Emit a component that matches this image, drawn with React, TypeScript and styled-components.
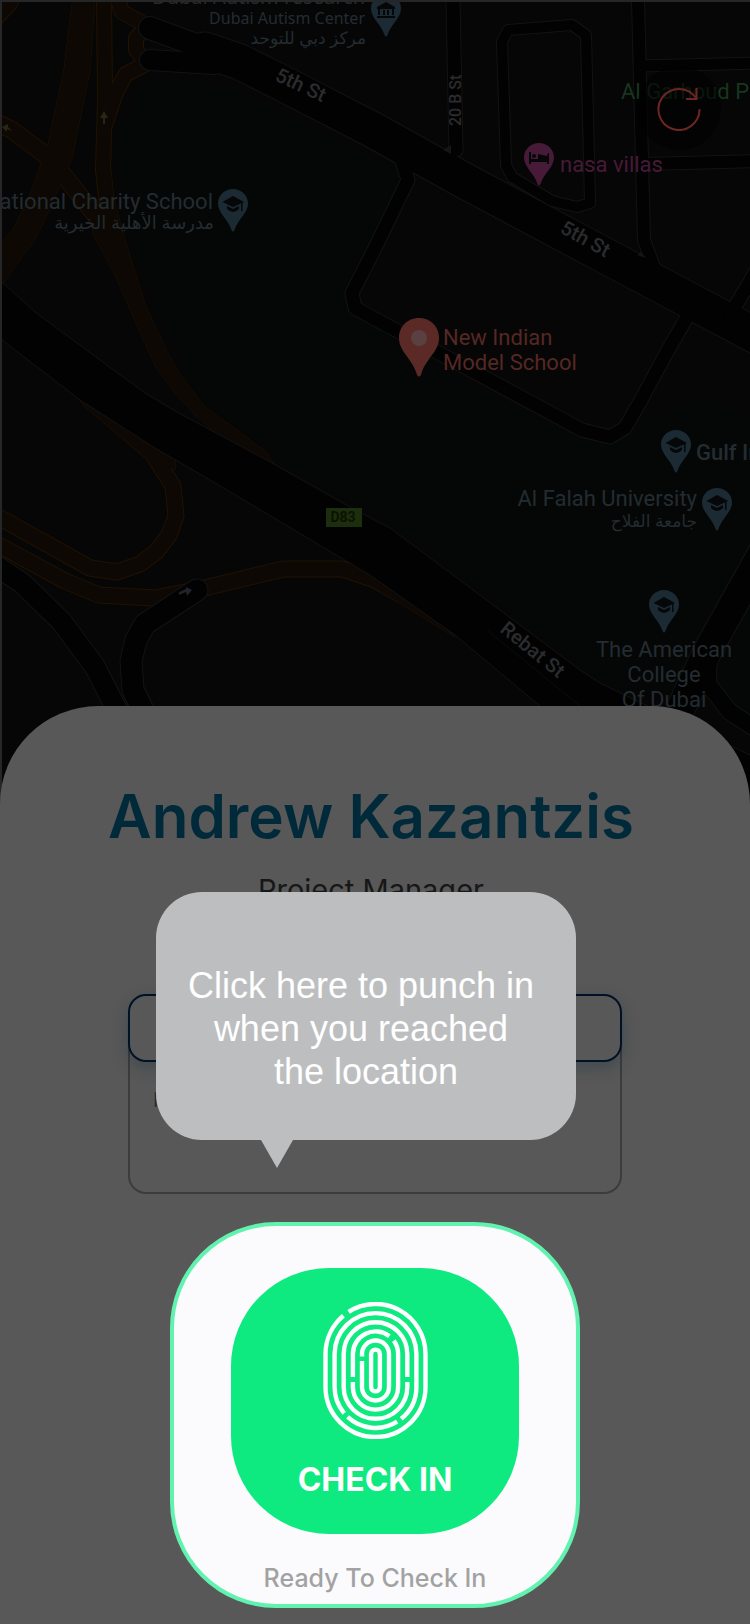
import React from "react";
import styled, { createGlobalStyle } from "styled-components";

const GlobalStyle = createGlobalStyle`
  *, *::before, *::after { box-sizing: border-box; }
  html { background: #060606; }
  body { margin: 0; font-family: Inter, "Liberation Sans", sans-serif; }
  button { font: inherit; padding: 0; cursor: pointer; }
`;

const Screen = styled.main`
  display: flex;
  flex-direction: column;
  min-height: 100vh;
  background: #060606;
`;

const MapPanel = styled.section`
  position: relative;
  height: 806px;
  margin-bottom: -100px;
  border-top: 2px solid #262626;
  border-left: 2px solid #262626;
  overflow: hidden;
`;

const MapDrawing = styled.svg`
  display: block;
  width: 100%;
  height: 100%;
`;

const RefreshButton = styled.button`
  position: absolute;
  top: 64px;
  right: 29px;
  width: 84px;
  height: 84px;
  display: grid;
  place-items: center;
  border: 0;
  border-radius: 50%;
  background: rgba(2, 2, 2, 0.6);
`;

const Sheet = styled.section`
  position: relative;
  flex: 1;
  display: flex;
  flex-direction: column;
  align-items: center;
  padding: 76px 16px 16px;
  border-radius: 98px 98px 0 0;
  background: #585858;
`;

const Profile = styled.header`
  padding-right: 8px;
  text-align: center;
`;

const Name = styled.h1`
  margin: 0;
  font-size: 60px;
  font-weight: 600;
  line-height: 68px;
  color: #002a3a;
`;

const Role = styled.p`
  margin: 22px 0 0;
  font-size: 29px;
  line-height: 36px;
  color: #171717;
`;

const Shift = styled.section`
  width: 494px;
  max-width: 100%;
  height: 200px;
  margin-top: 86px;
`;

const ShiftSelect = styled.button`
  position: relative;
  display: block;
  width: 100%;
  height: 68px;
  border: 2px solid #001226;
  border-radius: 18px;
  background: #585858;
  box-shadow: 0 6px 16px rgba(0, 30, 50, 0.25);
`;

const ShiftDetails = styled.div`
  height: 152px;
  margin-top: -20px;
  padding: 46px 23px 0;
  border: 2px solid #3c3c3c;
  border-top: 0;
  border-radius: 0 0 18px 18px;
  font-size: 20px;
  line-height: 24px;
  color: #2b2b2b;
`;

const Tip = styled.div`
  position: absolute;
  top: 186px;
  left: calc(50% - 219px);
  width: 420px;
  height: 248px;
  padding: 72px 20px 0;
  border-radius: 46px;
  background: #bdbec0;
  color: #fff;
  font-family: "Liberation Sans", Arial, sans-serif;
  font-size: 36px;
  line-height: 43px;
  text-align: center;
  white-space: nowrap;

  &::after {
    content: "";
    position: absolute;
    top: 100%;
    left: 105px;
    border: 16px solid transparent;
    border-top: 28px solid #bdbec0;
    border-bottom: 0;
  }
`;

const TipLine = styled.span`
  display: block;
`;

const CheckInCard = styled.section`
  width: 410px;
  max-width: 100%;
  height: 386px;
  margin-top: 28px;
  display: flex;
  flex-direction: column;
  align-items: center;
  padding-top: 42px;
  border: 4px solid #62f2b0;
  border-radius: 106px;
  background: #fbfbfe;
`;

const CheckInButton = styled.button`
  width: 288px;
  height: 266px;
  display: flex;
  flex-direction: column;
  align-items: center;
  padding-top: 34px;
  border: 0;
  border-radius: 98px;
  background: #0eea80;
  color: #fff;
  font-size: 32px;
  font-weight: 700;
  line-height: 38px;
`;

const ButtonLabel = styled.span`
  margin-top: 22px;
`;

const Status = styled.p`
  margin: 28px 0 0;
  font-size: 25px;
  font-weight: 500;
  line-height: 32px;
  color: #a2a2a2;
`;

const MapText = styled.text<{ $size?: number; $weight?: number; $wide?: boolean }>`
  font-family: ${(p) => (p.$wide ? '"Noto Sans", "DejaVu Sans", sans-serif' : 'Roboto, "DejaVu Sans", sans-serif')};
  font-size: ${(p) => p.$size ?? 22}px;
  font-weight: ${(p) => p.$weight ?? 400};
`;

const PLACE = "#232c31";
const STREET = "#2a2c2e";
const PIN = "#1c2a34";
const ROAD_EDGE = "#131315";
const RAMP_EDGE = "#211202";
const RAMP = "#0d0803";

type Road = { d: string; w: number };

const darkRoads: Road[] = [
  { w: 35, d: "M205 50 L240 62 L282 83 L375 131 L463 180 L600 253 L683 297 L760 338" },
  { w: 22, d: "M150 28 L215 52" },
  { w: 20, d: "M150 60 L215 64" },
  { w: 13, d: "M453 0 L456 150" },
  { w: 10, d: "M508 30 L572 25 L586 35 L590 203 L577 207 L552 201 L512 177 L506 165 L502 42 Z" },
  { w: 12, d: "M638 0 L644 240 L655 270" },
  { w: 11, d: "M640 66 L760 63" },
  { w: 12, d: "M645 164 L760 161" },
  { w: 13, d: "M400 155 L408 180 L375 248 L352 293 L355 308 L375 319 L465 367 L582 430 L610 437 L625 428 L641 400 L668 350 L690 312" },
  { w: 13, d: "M730 315 L760 265" },
  { w: 20, d: "M-5 565 L22 583 L62 622 L95 667 L120 716" },
  { w: 21, d: "M197 590 L145 624 L136 640 L131 661 L133 690 L148 720" },
  { w: 28, d: "M765 548 L709 648 L680 710" },
  { w: 16, d: "M709 640 L708 684 L730 712 L770 738" },
];

const rampRoads: Road[] = [
  { w: 15, d: "M-5 515 L90 568 L117 572 L140 564 L156 552 L169 535 L176 516 L173 486 L152 453 L125 430" },
  { w: 15, d: "M-5 543 L65 581 L99 595 L155 598 L205 588 L283 569 L342 569 L375 580 L400 594" },
  { w: 16, d: "M-5 122 L12 130 L44 154 L66 178 L96 216 L110 245" },
  { w: 14, d: "M118 0 L122 12 L148 26" },
  { w: 14, d: "M146 28 L136 38 L136 50 L146 62" },
  { w: 14, d: "M146 64 L126 74 L116 92 L105 125" },
  { w: 14, d: "M104 -5 L105 100 L103 170 L108 215" },
  { w: 16, d: "M-5 18 L10 2" },
];

const rampShapes = [
  "M73 -2 L70 20 L64 70 L48 145 L28 200 L14 228 L-2 248 V290 L36 238 L52 203 L72 158 L90 70 L95 -2 Z",
  "M98 170 L101 205 L92 232 L115 275 L148 350 L156 367 L175 393 L195 415 L230 445 L274 464 L265 451 L205 407 L180 375 L166 350 L145 305 L122 230 L113 195 L111 170 Z",
  "M78 398 L85 407 L145 457 L175 470 L175 440 Z",
  "M375 560 L455 637 L375 588 Z",
];

const highway =
  "M-5 276 L35 312 L100 360 L145 393 L175 411 L272 463 L350 507 L390 528 L580 670 L600 683 L660 712 L760 760 L760 830 L620 775 L540 706 L455 635 L370 575 L210 480 L155 448 L80 400 L15 350 L-5 334 Z";

function RoadLines({ roads, color, extra = 0 }: { roads: Road[]; color: string; extra?: number }) {
  return (
    <g fill="none" stroke={color} strokeLinejoin="round" strokeLinecap="round">
      {roads.map((r) => <path key={r.d} d={r.d} strokeWidth={r.w + extra} />)}
    </g>
  );
}

function Pin({ x, y, kind = "school" }: { x: number; y: number; kind?: "school" | "museum" | "hotel" }) {
  return (
    <g transform={`translate(${x} ${y})`}>
      <path d="M0 0C8.500 0 15 6.500 15 14.500C15 24 5 30 1.500 41Q0 44-1.500 41C-5 30-15 24-15 14.500C-15 6.500-8.500 0 0 0Z" fill={kind === "hotel" ? "#471a38" : PIN} />
      <g fill="#060708">
        {kind === "school" && (
          <>
            <path d="M0 7L11 13L0 18L-10.500 13Z" />
            <path d="M-6 17L0 20L6 17V20Q0 26-6 20Z" />
            <rect x="8" y="13" width="1.500" height="9" />
          </>
        )}
        {kind === "museum" && (
          <>
            <path d="M0 8L9 13V15H-9V13Z" />
            <path d="M-8 15H-6V21H-8ZM-3 16H-1V21H-3ZM1 16H3V21H1ZM6 15H8V21H6ZM-9 22H9V24H-9Z" />
          </>
        )}
        {kind === "hotel" && (
          <>
            <path d="M-10 9H-8V16H-1V11L8 13L9 10H10V21H8V19H-8V21H-10Z" />
            <circle cx="-5" cy="13" r="2" />
          </>
        )}
      </g>
    </g>
  );
}

function CityMap() {
  return (
    <MapDrawing viewBox="2 2 748 804" preserveAspectRatio="xMidYMin slice" role="img" aria-label="Map around New Indian Model School">
      <rect width="760" height="810" fill="#060606" />
      <path d="M150 78 L232 88 L390 165 L400 185 L340 295 L350 312 L470 385 L590 445 L650 420 L700 400 L760 420 V720 L600 680 L400 530 L300 475 L200 400 L130 240 L115 140 Z" fill="#050706" />

      <RoadLines roads={rampRoads} color={RAMP_EDGE} extra={2} />
      {rampShapes.map((d) => <path key={d} d={d} fill={RAMP_EDGE} stroke={RAMP_EDGE} />)}
      <RoadLines roads={rampRoads} color={RAMP} />
      {rampShapes.map((d) => <path key={d} d={d} fill={RAMP} />)}

      <path d={highway} fill="#020202" stroke={ROAD_EDGE} />
      <RoadLines roads={darkRoads} color={ROAD_EDGE} extra={2} />
      <RoadLines roads={darkRoads} color="#020202" />
      <path d="M487 630 L580 706" stroke="#0c0c0d" />
      <g fill="#2a2617">
        <path d="M104 111L108 118H105V124H103V118H100Z" />
        <path d="M2 127L8 124V127L12 131L7 129V132Z" />
      </g>
      <path d="M192 590L186 587V589L179 592V595L186 592L187 596Z" fill="#23232b" />
      <path d="M443 150L451 145V154ZM637 255L641 252L646 258Z" fill="#151516" />

      <g fill={STREET}>
        <MapText transform="translate(274 80) rotate(25)" $size={20} $weight={500}>5th St</MapText>
        <MapText transform="translate(559 232) rotate(29)" $size={20} $weight={500}>5th St</MapText>
        <MapText transform="translate(461 126) rotate(-90)" $size={16} $weight={500}>20 B St</MapText>
        <MapText transform="translate(499 631) rotate(39)" $size={20} $weight={500}>Rebat St</MapText>
      </g>

      <g fill={PLACE}>
        <g textAnchor="end">
          <MapText x="365" y="4" $size={20} $wide>Dubai Autism research</MapText>
          <MapText x="365" y="24" $size={16} $wide>Dubai Autism Center</MapText>
          <MapText x="366" y="44" $size={17} $wide>مركز دبي للتوحد</MapText>
          <MapText x="213" y="209">National Charity School</MapText>
          <MapText x="214" y="229" $size={18} $wide>مدرسة الأهلية الخيرية</MapText>
          <MapText x="697" y="506">Al Falah University</MapText>
          <MapText x="697" y="527" $size={17} $wide>جامعة الفلاح</MapText>
        </g>
        <MapText x="696" y="460" $weight={500}>Gulf Indian</MapText>
        <g textAnchor="middle">
          <MapText x="664" y="657">The American</MapText>
          <MapText x="664" y="682">College</MapText>
          <MapText x="664" y="707">Of Dubai</MapText>
        </g>
      </g>
      <MapText x="621" y="99" fill="#16361f">Al Garhoud Park</MapText>
      <MapText x="560" y="172" fill="#471a38">nasa villas</MapText>
      <MapText x="443" y="345" fill="#552823">New Indian</MapText>
      <MapText x="443" y="370" fill="#552823">Model School</MapText>

      <Pin x={386} y={-6} kind="museum" />
      <Pin x={233} y={189} />
      <Pin x={539} y={143} kind="hotel" />
      <Pin x={676} y={430} />
      <Pin x={717} y={488} />
      <Pin x={664} y={590} />

      <path d="M419 318C431 318 439 327 439 338C439 352 425 359 421 375Q419 378 417 375C413 359 399 352 399 338C399 327 407 318 419 318Z" fill="#5c2a26" />
      <circle cx="419" cy="338" r="8" fill="#5a4040" />

      <rect x="326" y="508" width="36" height="19" fill="#1c2e0d" />
      <MapText x="343" y="522" $size={14} $weight={700} textAnchor="middle" fill="#0a1302">D83</MapText>
    </MapDrawing>
  );
}

function Fingerprint() {
  return (
    <svg width="105" height="137" viewBox="0 0 105 137" fill="none" stroke="#fff" strokeWidth="4.400" aria-hidden="true">
      <path d="M25.600 9.800A50 50 0 0 1 102.500 52V85A50 50 0 0 1 2.500 85V52A50 50 0 0 1 20.400 13.700" />
      <path d="M21.200 111.300A40.900 40.900 0 0 1 11.600 85V52A40.900 40.900 0 0 1 93.400 52V85A40.900 40.900 0 0 1 78.200 116.800" />
      <path d="M74.200 119.700A40.900 40.900 0 0 1 24.600 114.900" />
      <path d="M84.300 80V85A31.800 31.800 0 0 1 20.700 85V52A31.800 31.800 0 0 1 84.300 52V75" />
      <path d="M29.900 75V52A22.600 22.600 0 0 1 66.400 34.200" />
      <path d="M70.800 38.600A22.600 22.600 0 0 1 75.100 52V85A22.600 22.600 0 0 1 29.900 85V80" />
      <path d="M39 54.500V52A13.500 13.500 0 0 1 66 52V85A13.500 13.500 0 0 1 39 85V59" />
      <rect x="48.100" y="47.600" width="8.800" height="41.800" rx="4.400" />
    </svg>
  );
}

export default function App() {
  return (
    <Screen>
      <GlobalStyle />
      <MapPanel>
        <CityMap />
        <RefreshButton type="button" aria-label="Refresh location">
          <svg width="46" height="46" viewBox="0 0 46 46" fill="none" stroke="#6e2524" strokeWidth="2" aria-hidden="true">
            <path d="M43.500 24A20.500 20.500 0 1 1 40 13" />
            <path d="M40.500 3V14H30" />
          </svg>
        </RefreshButton>
      </MapPanel>
      <Sheet>
        <Profile>
          <Name>Andrew Kazantzis</Name>
          <Role>Project Manager</Role>
        </Profile>
        <Shift>
          <ShiftSelect type="button" aria-label="Shift details" aria-expanded="true" />
          <ShiftDetails>From</ShiftDetails>
        </Shift>
        <CheckInCard>
          <CheckInButton type="button">
            <Fingerprint />
            <ButtonLabel>CHECK IN</ButtonLabel>
          </CheckInButton>
          <Status>Ready To Check In</Status>
        </CheckInCard>
        <Tip role="tooltip">
          <TipLine>Click here to punch in{"\u00a0"}</TipLine>
          <TipLine>when you reached{"\u00a0"}</TipLine>
          <TipLine>the location</TipLine>
        </Tip>
      </Sheet>
    </Screen>
  );
}
